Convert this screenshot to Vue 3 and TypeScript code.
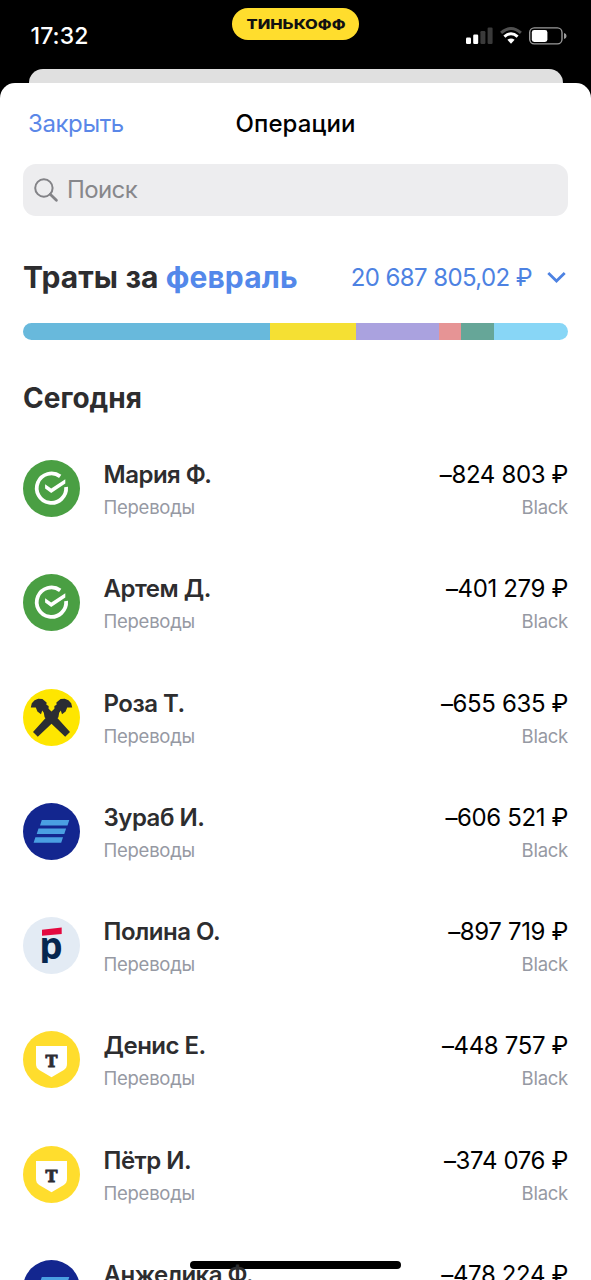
<script setup lang="ts">
type Bank = 'sber' | 'raif' | 'blue' | 'ros' | 'tink'

interface Operation {
  name: string
  amount: string
  bank: Bank
}

interface Segment {
  color: string
  share: number
}

const operations: Operation[] = [
  { name: 'Мария Ф.', amount: '–824 803 ₽', bank: 'sber' },
  { name: 'Артем Д.', amount: '–401 279 ₽', bank: 'sber' },
  { name: 'Роза Т.', amount: '–655 635 ₽', bank: 'raif' },
  { name: 'Зураб И.', amount: '–606 521 ₽', bank: 'blue' },
  { name: 'Полина О.', amount: '–897 719 ₽', bank: 'ros' },
  { name: 'Денис Е.', amount: '–448 757 ₽', bank: 'tink' },
  { name: 'Пётр И.', amount: '–374 076 ₽', bank: 'tink' },
  { name: 'Анжелика Ф.', amount: '–478 224 ₽', bank: 'blue' },
]

const segments: Segment[] = [
  { color: '#68b9dc', share: 247.2 },
  { color: '#f5e033', share: 86 },
  { color: '#aaa2df', share: 82.3 },
  { color: '#e69495', share: 22.5 },
  { color: '#66a698', share: 33 },
  { color: '#88d6f6', share: 74 },
]
</script>

<template>
  <div class="screen">
    <header class="status">
      <span class="time">17:32</span>
      <div class="pill">
        <svg width="100" height="14" viewBox="0 0 100 14">
          <text class="brand" x="0.5" y="11.6" textLength="99" lengthAdjust="spacingAndGlyphs">ТИНЬКОФФ</text>
        </svg>
      </div>
      <div class="indicators">
        <svg width="102" height="20" viewBox="0 0 102 20">
          <rect x="1" y="11.5" width="5" height="6.5" rx="1.2" fill="#fff" />
          <rect x="8.2" y="8.5" width="5" height="9.5" rx="1.2" fill="#fff" />
          <rect x="15.4" y="5" width="5" height="13" rx="1.2" fill="#3a3a3a" />
          <rect x="22.6" y="1.5" width="5" height="16.5" rx="1.2" fill="#3a3a3a" />
          <g fill="none" stroke-width="3">
            <path d="M36.1 6.9 Q46 -1.9 55.9 6.9" stroke="#505050" />
            <path d="M39.4 10.6 Q46 4.8 52.6 10.6" stroke="#fff" />
          </g>
          <path d="M42.4 13.8 Q46 11 49.6 13.8 L46 17.8Z" fill="#fff" />
          <rect x="64.7" y="1.9" width="32.3" height="16" rx="4.6" fill="none" stroke="#9a9a9a" stroke-width="1.4" />
          <rect x="66.8" y="4" width="15.6" height="12" rx="2.4" fill="#fff" />
          <path d="M99 7 Q101.6 7.6 101.6 10 T99 13Z" fill="#9a9a9a" />
        </svg>
      </div>
    </header>
    <div class="back-sheet"></div>

    <main class="sheet">
      <nav class="nav">
        <span class="close">Закрыть</span>
        <h1 class="title">Операции</h1>
        <span></span>
      </nav>

      <div class="search">
        <svg width="25" height="25" viewBox="0 0 25 25" fill="none" stroke="#838387">
          <circle cx="9.9" cy="10" r="8.7" stroke-width="2" />
          <path d="M16.2 16.3 L22.4 22.2" stroke-width="2.8" stroke-linecap="round" />
        </svg>
        <span class="placeholder">Поиск</span>
      </div>

      <section class="summary">
        <h2 class="heading">Траты за <span class="month">февраль</span></h2>
        <span class="total">20 687 805,02 ₽</span>
        <svg class="chevron" width="19" height="12" viewBox="0 0 19 12">
          <path d="M1.3 2 L9.5 10 L17.7 2" fill="none" stroke="#4d82e2" stroke-width="2.8" />
        </svg>
      </section>

      <div class="bar">
        <i v-for="s in segments" :key="s.color" :style="{ background: s.color, flexGrow: s.share }"></i>
      </div>

      <h3 class="day">Сегодня</h3>

      <ul class="list">
        <li v-for="op in operations" :key="op.name" class="row">
          <svg class="logo" viewBox="0 0 57 57">
            <template v-if="op.bank === 'sber'">
              <circle cx="28.5" cy="28.5" r="28.5" fill="#4a9f43" />
              <path d="M37.2 16.4 A14.7 14.7 0 1 0 43.1 27" fill="none" stroke="#fff" stroke-width="3.8" />
              <path d="M22.1 24.2 L28.2 28.4 L42.3 19.2 V23.6 L28.2 33 L22.1 28.6Z" fill="#fff" />
            </template>
            <template v-else-if="op.bank === 'raif'">
              <circle cx="28.5" cy="28.5" r="28.5" fill="#fee600" />
              <g fill="#2b2d33">
                <path
                  v-for="side in [1, -1]"
                  :key="side"
                  :transform="side === 1 ? undefined : 'translate(57 0) scale(-1 1)'"
                  d="M7.8 18.6 L8.8 14.2 L11.6 11.2 L15.2 9.8 L19.4 10.1 L23.6 13.4 L23.4 15.8 L25.6 17 L25.6 19.8 L28.5 22.4 L47 43 L42.2 47.8 L21.6 28.2 L20.8 23.8 L19.2 21.6 L18 25.2 L14.4 22.4 L12.8 18.6Z"
                />
              </g>
            </template>
            <template v-else-if="op.bank === 'blue'">
              <circle cx="28.5" cy="28.5" r="28.5" fill="#13268f" />
              <path
                d="M18.8 17 H46.3 L44.5 22.5 H17Z M15.5 25.6 H43.1 L41.3 31.1 H13.7Z M12.4 34.3 H40 L38.2 39.8 H10.6Z"
                fill="#4a9fe2"
              />
            </template>
            <template v-else-if="op.bank === 'ros'">
              <circle cx="28.5" cy="28.5" r="28.5" fill="#e3ebf4" />
              <path d="M19 12.8 L38.7 10.4 V17 L19 18.8Z" fill="#e4093f" />
              <clipPath id="stem"><rect x="0" y="20" width="57" height="26" /></clipPath>
              <text class="ros" x="16.2" y="42" clip-path="url(#stem)">p</text>
            </template>
            <template v-else>
              <circle cx="28.5" cy="28.5" r="28.5" fill="#ffdd2d" />
              <path d="M13 15 H44 V33 Q44 37 40.8 38.9 L28.5 46.2 L16.2 38.9 Q13 37 13 33Z" fill="#fff" />
              <text class="tink" x="28.5" y="35.7" text-anchor="middle">Т</text>
            </template>
          </svg>
          <div class="who">
            <span class="name">{{ op.name }}</span>
            <span class="note">Переводы</span>
          </div>
          <div class="sum">
            <span class="amount">{{ op.amount }}</span>
            <span class="note card">Black</span>
          </div>
        </li>
      </ul>
      <div class="home"></div>
    </main>
  </div>
</template>

<style>
html,
body {
  background: #000;
}
</style>

<style scoped>
.screen {
  position: relative;
  width: 591px;
  height: 1280px;
  overflow: hidden;
  background: #000;
  color: #000;
  font-family: Inter, 'Liberation Sans', sans-serif;
  font-size: 24px;
  display: flex;
  flex-direction: column;
}

.status {
  height: 69px;
  flex: none;
  display: grid;
  grid-template-columns: 1fr 127px 1fr;
  align-items: start;
}

.time {
  margin: 20px 0 0 30.5px;
  line-height: 32px;
  font-size: 23px;
  letter-spacing: 0.1px;
  font-weight: 500;
  color: #fff;
}

.pill {
  margin-top: 8px;
  height: 32px;
  border-radius: 16px;
  background: #ffdd2d;
  display: flex;
  align-items: center;
  justify-content: center;
}

.brand {
  font-size: 13.5px;
  font-weight: 800;
  fill: #111;
}

.indicators {
  display: flex;
  justify-content: flex-end;
  padding: 26px 24px 0 0;
}

.back-sheet {
  flex: none;
  height: 14px;
  margin: 0 28.5px;
  border-radius: 14px 14px 0 0;
  background: #e0e0e0;
}

.sheet {
  position: relative;
  z-index: 0;
  flex: none;
  height: 1197px;
  box-sizing: border-box;
  padding: 0 23px;
  border-radius: 15px 15px 0 0;
  background: #fff;
  overflow: hidden;
}

.nav {
  height: 81px;
  display: grid;
  grid-template-columns: 1fr auto 1fr;
  align-items: center;
}

.close {
  padding-left: 5px;
  letter-spacing: -0.4px;
  color: #5a87e8;
}

.title {
  margin: 0;
  font-size: 24px;
  font-weight: 500;
  letter-spacing: 0.1px;
}

.search {
  height: 52px;
  border-radius: 13px;
  background: #ededef;
  display: flex;
  align-items: center;
  gap: 8px;
  padding-left: 11px;
}

.placeholder {
  color: #87878b;
  line-height: 32px;
  letter-spacing: -0.6px;
}

.summary {
  height: 40px;
  margin-top: 41px;
  display: flex;
  align-items: center;
  white-space: nowrap;
}

.heading {
  margin: 0;
  flex: 1;
  font-size: 30px;
  line-height: 40px;
  font-weight: 700;
  letter-spacing: 0.1px;
  color: #2d2d2f;
}

.month {
  color: #5388ea;
}

.total {
  letter-spacing: -0.6px;
  color: #4d82e2;
}

.chevron {
  margin-left: 15px;
  margin-right: 2px;
}

.bar {
  height: 17px;
  margin-top: 26px;
  border-radius: 9px;
  overflow: hidden;
  display: flex;
}

.bar i {
  flex: 1 1 0;
}

.day {
  margin: 38px 0 0;
  font-size: 28px;
  line-height: 40px;
  font-weight: 700;
  color: #2d2d2f;
}

.list {
  list-style: none;
  margin: 13.3px 0 0;
  padding: 0;
}

.row {
  height: 114.3px;
  display: flex;
  align-items: center;
}

.logo {
  flex: none;
  width: 57px;
  height: 57px;
}

.who,
.sum {
  display: flex;
  flex-direction: column;
  padding-top: 5px;
  line-height: 32px;
  white-space: nowrap;
}

.who {
  flex: 1;
  margin-left: 23.5px;
}

.sum {
  align-items: flex-end;
}

.name {
  font-weight: 600;
  letter-spacing: -0.5px;
  color: #2d2d2f;
}

.amount {
  letter-spacing: -0.36px;
  color: #000;
}

.note {
  font-size: 18.5px;
  letter-spacing: -0.25px;
  color: #9699a3;
}

.ros {
  font: 700 37px 'Open Sans', sans-serif;
  fill: #06264f;
}

.tink {
  font: 700 16px 'DejaVu Serif', serif;
  fill: #2d2d33;
  stroke: #2d2d33;
  stroke-width: 0.9px;
}

.home {
  position: absolute;
  z-index: -1;
  left: 190px;
  bottom: 11.5px;
  width: 211px;
  height: 7.5px;
  border-radius: 4px;
  background: #000;
}
</style>
